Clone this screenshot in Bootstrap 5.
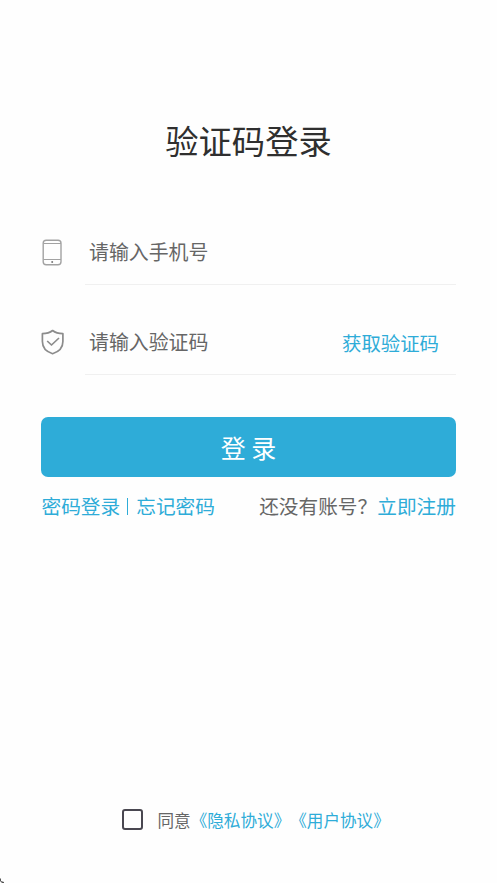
<!DOCTYPE html>
<html lang="zh-CN">
<head>
<meta charset="utf-8">
<meta name="viewport" content="width=device-width, initial-scale=1">
<title>验证码登录</title>
<link href="https://cdn.jsdelivr.net/npm/bootstrap@5.3.0/dist/css/bootstrap.min.css" rel="stylesheet">
<style>
  body { font-family: "Noto Sans CJK SC", sans-serif; color: #666; background: #fefefe; }
  a { color: #2eacd8; text-decoration: none; }
  .login-page { height: 883px; padding: 115px 41px 0; white-space: nowrap; overflow: hidden; text-spacing-trim: space-all; }
  .page-title { font-size: 33.3px; line-height: 50px; color: #2f2f2f; font-weight: 400; }
  .fields { margin-top: 55px; }
  .field-row { height: 65px; }
  .field-row + .field-row { margin-top: 25px; }
  .field-icon { width: 24px; height: 64px; margin-right: 20px; }
  .field-box { border-bottom: 1px solid #f0f0f0; }
  .field-box input { height: 63px; font-size: 19.9px; padding: 0 0 0 4px; }
  .field-box input, .field-box input:focus { background: transparent; box-shadow: none; color: #666; }
  .field-box input::placeholder { color: #666; opacity: 1; }
  .get-code { font-size: 19.4px; line-height: 65px; margin-right: 17px; }
  .btn-login { height: 60.5px; margin-top: 41.5px; border-radius: 7px; background: #2eacd8; color: #fff; font-size: 25px; line-height: 60px; padding: 0; border: 0; }
  .links { font-size: 19.7px; line-height: 30px; margin-top: 14px; padding-left: .5px; }
  .links-divider { width: 1px; height: 17px; background: #2eacd8; margin: 0 8px 0 7px; }
  .agreement { margin-top: 283px; height: 30px; padding-left: 81px; font-size: 16.6px; line-height: 30px; }
  .agreement label, .agreement a { padding-top: 1px; }
  .agreement .form-check-input { width: 21px; height: 21px; border: 2px solid #494750; border-radius: 3px; margin: 0 14.5px 0 0; background-color: #fefefe; }
</style>
<script src="https://cdn.jsdelivr.net/npm/bootstrap@5.3.0/dist/js/bootstrap.bundle.min.js"></script>
</head>
<body>
<main class="login-page">
  <h1 class="page-title text-center mb-0">验证码登录</h1>
  <form>
    <div class="fields">
      <div class="field-row d-flex">
        <svg class="field-icon flex-shrink-0" viewBox="0 0 24 64" fill="none" stroke="#a2a2a2">
          <rect x="2.2" y="20.2" width="17.8" height="24.6" rx="3" stroke-width="1.4"/>
          <path d="M2.5 23.5H20M2.5 39.5H20" stroke-width="1"/>
          <circle cx="11.2" cy="42" r="1" fill="#777" stroke="none"/>
        </svg>
        <div class="field-box d-flex flex-grow-1">
          <input class="form-control border-0 rounded-0" type="tel" placeholder="请输入手机号" aria-label="手机号">
        </div>
      </div>
      <div class="field-row d-flex">
        <svg class="field-icon flex-shrink-0" viewBox="0 0 24 64" fill="none" stroke="#8c8c8c" stroke-width="1.7" stroke-linejoin="round">
          <path d="M11.6 20.5C8.4 23 5 23.6 1.4 23.7V31.5C1.4 37.6 5.6 41.8 11.6 43.7C17.6 41.8 21.9 37.6 21.9 31.5V23.7C18.2 23.6 14.8 23 11.6 20.5Z"/>
          <path d="M6.2 31L10.5 35L18 28"/>
        </svg>
        <div class="field-box d-flex flex-grow-1">
          <input class="form-control border-0 rounded-0" type="text" placeholder="请输入验证码" aria-label="验证码">
          <a class="get-code" href="#">获取验证码</a>
        </div>
      </div>
    </div>
    <button class="btn btn-login w-100 d-block" type="button">登 录</button>
    <div class="links d-flex justify-content-between">
      <div class="d-flex align-items-center"><a href="#">密码登录</a><span class="links-divider"></span><a href="#">忘记密码</a></div>
      <div>还没有账号？<a href="#">立即注册</a></div>
    </div>
    <div class="agreement d-flex align-items-center">
      <input class="form-check-input flex-shrink-0" type="checkbox" id="agree">
      <label for="agree">同意</label><a href="#">《隐私协议》</a><a href="#">《用户协议》</a>
    </div>
  </form>
</main>
<svg class="position-absolute bottom-0 start-0" width="5" height="5" viewBox="0 0 5 5"><path d="M0 0L1 1V3L4 4V5H2L0 3Z" fill="#555"/></svg>
</body>
</html>
